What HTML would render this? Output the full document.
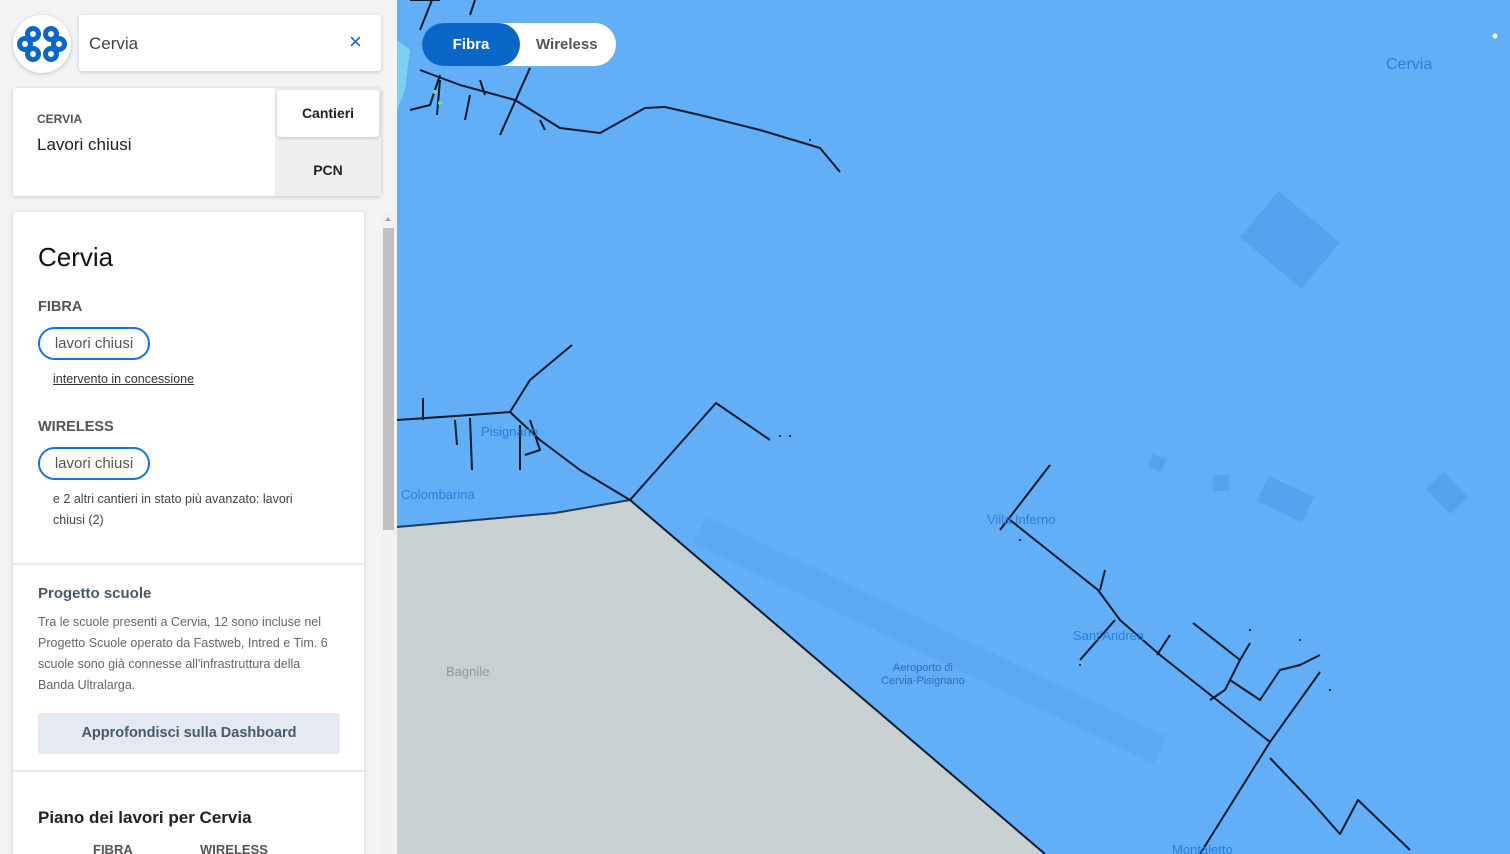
<!DOCTYPE html>
<html><head><meta charset="utf-8">
<style>
*{box-sizing:border-box;margin:0;padding:0}
html,body{width:1510px;height:854px;overflow:hidden}
body{font-family:"Liberation Sans",sans-serif;background:#62aef7;position:relative}
#side{position:absolute;left:0;top:0;width:397px;height:854px;background:#f2f3f4;overflow:hidden}
.card{position:absolute;background:#fff;box-shadow:0 1px 4px rgba(0,0,0,.18);border-radius:3px}
.logo{position:absolute;left:13px;top:15px;width:58px;height:58px;border-radius:50%;background:#fff;box-shadow:0 1px 4px rgba(0,0,0,.2)}
.h{color:#555;font-weight:bold}
.pill{position:absolute;left:38px;width:112px;height:33px;border:2px solid #1a73d9;border-radius:17px;font-size:15px;color:#555;text-align:center;line-height:29px}
.sm{font-size:12.5px;color:#333}
.p{font-size:12.5px;color:#666;line-height:21px}
#map{position:absolute;left:397px;top:0;width:1113px;height:854px;overflow:hidden}
.lbl{position:absolute;color:#2a80d6;font-size:13px}
</style></head><body>
<div id="map">
<svg width="1113" height="854" viewBox="397 0 1113 854" style="position:absolute;left:0;top:0">
<polygon points="397,527 555,513 630,500 1045,854 397,854" fill="#c9d0d2"/>
<polyline points="397,527 555,513 630,500" fill="none" stroke="#1b3c5e" stroke-width="2"/>
<path d="M397,40 L410,50 L405,90 L397,110Z" fill="#7ed0f0"/>
<g stroke="#5aa4ee" stroke-width="30" fill="none" opacity=".6"><path d="M700,530 L1160,750"/></g>
<g fill="none" stroke="#0d1b2a" stroke-width="2" stroke-linejoin="round">
<path d="M630,500 L1045,854"/>
<path d="M630,500 L716,403 L770,440"/>
<path d="M397,420 L470,415 L510,412 L540,440 L580,470 L630,500"/>
<path d="M510,412 L530,380 L572,345"/>
<path d="M455,420 L457,445 M470,418 L472,470 M520,425 L520,470 M530,420 L540,450 L525,455 M423,398 L423,420"/>
<path d="M420,70 L460,85 L515,100 L560,128 L600,133 L645,108 L665,107 L700,115 L760,130 L820,148 L840,172"/>
<path d="M500,135 L530,68 M470,95 L465,120 M440,80 L437,115 M410,110 L430,105 L440,75 M480,80 L485,95 M540,120 L545,130"/>
<path d="M1000,530 L1050,465 M1010,520 L1098,590 L1120,620 L1160,655 L1270,742 L1320,672 M1270,742 L1200,854 M1270,758 L1310,800 L1340,834 L1358,800 L1410,850"/>
<path d="M1105,570 L1100,590 M1115,620 L1080,660 M1157,655 L1170,635 M1193,623 L1240,660 L1225,690 M1240,660 L1250,643 M1230,680 L1260,700 L1280,670 L1300,665 L1320,655 M1210,700 L1225,690"/>
<path d="M410,0 L440,0 M432,0 L420,30 M475,0 L470,15"/>
</g>
<g fill="#0d1b2a">
<circle cx="790" cy="436" r="1"/><circle cx="780" cy="436" r="1"/><circle cx="810" cy="140" r="1"/><circle cx="1250" cy="630" r="1"/><circle cx="1300" cy="640" r="1"/><circle cx="1330" cy="690" r="1"/><circle cx="1080" cy="665" r="1"/><circle cx="1020" cy="540" r="1"/>
</g>
<circle cx="435" cy="92" r="2" fill="#6de29a"/><circle cx="440" cy="103" r="2" fill="#6de29a"/>
<circle cx="1495" cy="36" r="2.5" fill="#fff"/>
<g fill="#4f9eeb" opacity=".7"><rect x="1150" y="456" width="14" height="14" transform="rotate(20 1157 463)"/><rect x="1213" y="475" width="16" height="16"/><rect x="1260" y="485" width="50" height="28" transform="rotate(25 1285 500)"/><rect x="1430" y="480" width="35" height="25" transform="rotate(45 1447 492)"/><rect x="1250" y="210" width="80" height="60" transform="rotate(40 1290 240)"/></g>
</svg>
<div class="lbl" style="left:989px;top:56px;font-size:16px">Cervia</div>
<div class="lbl" style="left:4px;top:487px">Colombarina</div>
<div class="lbl" style="left:590px;top:512px">Villa Inferno</div>
<div class="lbl" style="left:676px;top:628px">Sant'Andrea</div>
<div class="lbl" style="left:775px;top:842px">Montaletto</div>
<div class="lbl" style="left:49px;top:664px;color:#8a9aa0">Bagnile</div>
<div class="lbl" style="left:84px;top:424px">Pisignano</div>
<div class="lbl" style="left:484px;top:662px;font-size:11px;text-align:center;color:#2b6fb8;line-height:13px">Aeroporto di<br>Cervia-Pisignano</div>
<div style="position:absolute;left:25px;top:23px;width:194px;height:43px;background:#fff;border-radius:22px"></div>
<div style="position:absolute;left:25px;top:23px;width:98px;height:43px;background:#0a66c8;border-radius:22px;color:#fff;font-weight:bold;font-size:15px;text-align:center;line-height:43px">Fibra</div>
<div style="position:absolute;left:139px;top:23px;color:#555;font-weight:bold;font-size:15px;line-height:43px">Wireless</div>
</div>
<div id="side">
<div class="logo"><svg width="58" height="58" viewBox="0 0 58 58"><g fill="none" stroke="#0a66c8" stroke-width="5">
<circle cx="20" cy="19" r="5.5"/><circle cx="38" cy="19" r="5.5"/><circle cx="12" cy="29" r="5.5"/><circle cx="46" cy="29" r="5.5"/><circle cx="20" cy="39" r="5.5"/><circle cx="38" cy="39" r="5.5"/></g></svg></div>
<div class="card" style="left:79px;top:15px;width:302px;height:56px"><span style="position:absolute;left:10px;top:19px;font-size:17px;color:#444">Cervia</span><span style="position:absolute;left:270px;top:14px;font-size:22px;color:#0a66c8">×</span></div>
<div class="card" style="left:13px;top:88px;width:368px;height:108px">
<div style="position:absolute;left:24px;top:24px;font-size:12px;font-weight:bold;color:#555">CERVIA</div>
<div style="position:absolute;left:24px;top:47px;font-size:17px;color:#222">Lavori chiusi</div>
<div style="position:absolute;left:262px;top:0;width:106px;height:108px;background:#efefef"></div>
<div class="card" style="left:264px;top:2px;width:102px;height:47px;text-align:center;line-height:47px;font-weight:bold;font-size:14px;color:#222">Cantieri</div>
<div style="position:absolute;left:262px;top:60px;width:106px;text-align:center;line-height:45px;font-weight:bold;font-size:14px;color:#222">PCN</div>
</div>
<div class="card" style="left:13px;top:212px;width:351px;height:660px">
<div style="position:absolute;left:25px;top:30px;font-size:26px;color:#111">Cervia</div>
<div class="h" style="position:absolute;left:25px;top:87px;font-size:14.5px">FIBRA</div>
<div class="pill" style="left:25px;top:115px">lavori chiusi</div>
<div class="sm" style="position:absolute;left:40px;top:160px;text-decoration:underline">intervento in concessione</div>
<div class="h" style="position:absolute;left:25px;top:207px;font-size:14.5px">WIRELESS</div>
<div class="pill" style="left:25px;top:235px">lavori chiusi</div>
<div class="sm" style="position:absolute;left:40px;top:277px;width:270px;line-height:21px;color:#444">e 2 altri cantieri in stato più avanzato: lavori chiusi (2)</div>
<div style="position:absolute;left:0;top:351px;width:351px;height:2px;background:#e8e8e8"></div>
<div style="position:absolute;left:25px;top:373px;font-size:15px;font-weight:bold;color:#4a5a6a">Progetto scuole</div>
<div class="p" style="position:absolute;left:25px;top:400px;width:298px">Tra le scuole presenti a Cervia, 12 sono incluse nel Progetto Scuole operato da Fastweb, Intred e Tim. 6 scuole sono già connesse all'infrastruttura della Banda Ultralarga.</div>
<div style="position:absolute;left:25px;top:501px;width:302px;height:41px;background:#e5e9f1;border-radius:3px;text-align:center;line-height:41px;font-weight:bold;font-size:14.5px;color:#4a5a6a">Approfondisci sulla Dashboard</div>
<div style="position:absolute;left:0;top:558px;width:351px;height:2px;background:#e8e8e8"></div>
<div style="position:absolute;left:25px;top:596px;font-size:17px;font-weight:bold;color:#222">Piano dei lavori per Cervia</div>
<div class="h" style="position:absolute;left:80px;top:630px;font-size:13px">FIBRA</div>
<div class="h" style="position:absolute;left:187px;top:630px;font-size:13px">WIRELESS</div>
</div>
<div style="position:absolute;left:381px;top:212px;width:15px;height:642px;background:#f1f1f1"></div>
<div style="position:absolute;left:383px;top:228px;width:11px;height:302px;background:#c1c1c1"></div>
<div style="position:absolute;left:385px;top:217px;border:3.5px solid transparent;border-bottom:4px solid #a0a0a0;border-top:0"></div>
</div>
</body></html>
